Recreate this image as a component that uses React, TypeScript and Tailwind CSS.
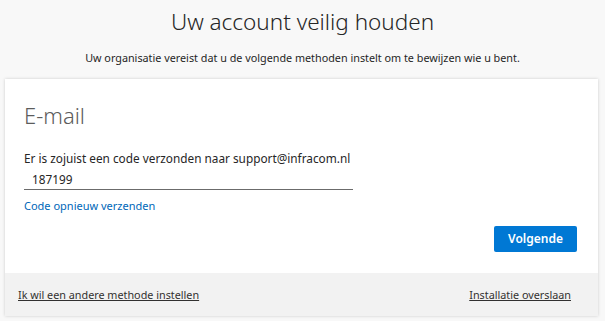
import React, { useState } from 'react';

const font = { fontFamily: '"Segoe UI", "Noto Sans", "Open Sans", sans-serif' };

export default function App() {
  const [code, setCode] = useState('187199');

  return (
    <div className="w-[605px] h-[321px] overflow-hidden bg-[#f8f8f8] text-[#323130]" style={font}>
      <h1 className="pt-[6px] text-center text-[22.5px] leading-[32px] font-light text-[#262626]">
        Uw account veilig houden
      </h1>
      <p className="mt-[12px] text-center text-[10.8px] leading-[16px] text-[#262626]">
        Uw organisatie vereist dat u de volgende methoden instelt om te bewijzen wie u bent.
      </p>

      <div className="mt-[13px] mx-[5px] w-[593px] bg-white shadow-[0_0_3px_rgba(0,0,0,0.18)]">
        <div className="pl-[19px] pr-[21px] pt-[22px] pb-[21px]">
          <h2 className="text-[22px] leading-[28px] font-light text-[#5c5c5c]">E-mail</h2>

          <p className="mt-[21px] text-[11.8px] leading-[16px] text-[#262626]">
            Er is zojuist een code verzonden naar support@infracom.nl
          </p>
          <input
            value={code}
            onChange={(e) => setCode(e.target.value)}
            className="mt-[2px] block w-[329px] h-[22px] px-[8px] text-[11.8px] text-[#262626] border-b border-[#6b6b6b] outline-none bg-transparent"
          />
          <a href="#" className="mt-[8px] block w-fit text-[11px] leading-[16px] text-[#0067b8]">
            Code opnieuw verzenden
          </a>

          <div className="mt-[12px] flex justify-end">
            <button
              type="button"
              className="w-[83px] h-[26px] rounded-[2px] bg-[#0078d4] text-white text-[12px] font-semibold"
            >
              Volgende
            </button>
          </div>
        </div>

        <div className="h-[43px] bg-[#f2f2f2] flex items-center justify-between pl-[13px] pr-[27px]">
          <a href="#" className="text-[10.8px] leading-[16px] text-[#323130] underline">
            Ik wil een andere methode instellen
          </a>
          <a href="#" className="text-[10.8px] leading-[16px] text-[#323130] underline">
            Installatie overslaan
          </a>
        </div>
      </div>
    </div>
  );
}
